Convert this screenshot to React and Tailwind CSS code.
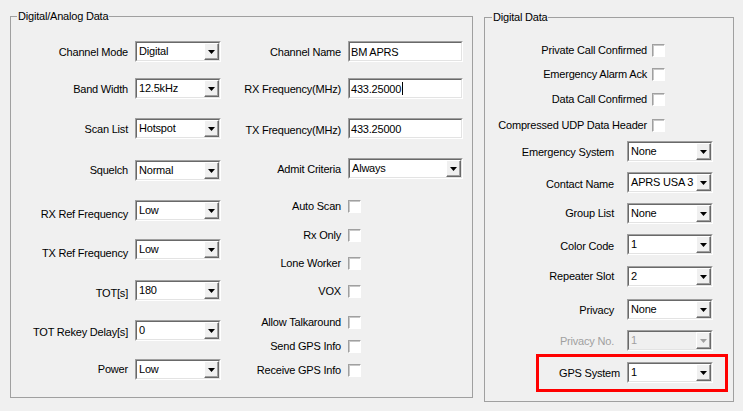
function Arrow({ disabled }) {
  return (
    <svg width="7" height="4" viewBox="0 0 7 4">
      <polygon points="0,0 7,0 3.5,4" fill={disabled ? "#a0a0a0" : "#000"} />
    </svg>
  );
}

function Combo({ value, w = "w-[86px]", disabled }) {
  return (
    <div
      className={`${w} h-[21px] shrink-0 border border-t-[#a0a0a0] border-l-[#a0a0a0] border-b-white border-r-white`}
    >
      <div
        className={`flex h-full border border-t-[#696969] border-l-[#696969] border-b-[#e3e3e3] border-r-[#e3e3e3] ${
          disabled ? "bg-[#f0f0f0] text-[#a0a0a0]" : "bg-white"
        }`}
      >
        <span className="flex-1 overflow-hidden whitespace-nowrap pl-[2px] leading-[16px]">
          {value}
        </span>
        <div className="flex w-[15px] items-center justify-center border border-t-white border-l-white border-b-[#696969] border-r-[#696969] bg-[#f0f0f0] shadow-[inset_-1px_-1px_0_#a0a0a0]">
          <Arrow disabled={disabled} />
        </div>
      </div>
    </div>
  );
}

function TextBox({ value, caret }) {
  return (
    <div className="w-[115px] h-[21px] border border-t-[#a0a0a0] border-l-[#a0a0a0] border-b-white border-r-white">
      <div className="flex h-full items-center border border-t-[#696969] border-l-[#696969] border-b-[#e3e3e3] border-r-[#e3e3e3] bg-white pl-[1px] leading-[16px]">
        <span>{value}</span>
        {caret && <span className="ml-[1px] h-[13px] w-px bg-black" />}
      </div>
    </div>
  );
}

function Check() {
  return (
    <div className="h-[13px] w-[13px] shrink-0 border border-t-[#a0a0a0] border-l-[#a0a0a0] border-b-white border-r-white bg-white shadow-[inset_1px_1px_0_#c8c8c8]" />
  );
}

export default function App() {
  return (
    <div className="flex h-[411px] w-[743px] items-start overflow-hidden bg-[#f0f0f0] font-['Liberation_Sans',Arial,sans-serif] text-[11px] leading-[13px] tracking-[-0.2px] text-black">
      {/* Digital/Analog Data */}
      <div className="relative ml-[10px] mt-[16px] flex h-[382px] w-[463px] border border-[#a0a0a0]">
        <span className="absolute left-[6px] -top-[7px] bg-[#f0f0f0] px-[1px]">
          Digital/Analog Data
        </span>

        <div className="flex w-[210px] flex-col">
          <div className="mt-[24px] flex h-[21px] items-center">
            <span className="w-[117px] translate-y-[1px] text-right">Channel Mode</span>
            <div className="ml-[7px]"><Combo value="Digital" /></div>
          </div>
          <div className="mt-[16px] flex h-[21px] items-center">
            <span className="w-[117px] translate-y-[1px] text-right">Band Width</span>
            <div className="ml-[7px]"><Combo value="12.5kHz" /></div>
          </div>
          <div className="mt-[19px] flex h-[21px] items-center">
            <span className="w-[117px] translate-y-[1px] text-right">Scan List</span>
            <div className="ml-[7px]"><Combo value="Hotspot" /></div>
          </div>
          <div className="mt-[21px] flex h-[21px] items-center">
            <span className="w-[117px] text-right">Squelch</span>
            <div className="ml-[7px]"><Combo value="Normal" /></div>
          </div>
          <div className="mt-[19px] flex h-[21px] items-center">
            <span className="w-[117px] translate-y-[4px] text-right">RX Ref Frequency</span>
            <div className="ml-[7px]"><Combo value="Low" /></div>
          </div>
          <div className="mt-[18px] flex h-[21px] items-center">
            <span className="w-[117px] translate-y-[4px] text-right">TX Ref Frequency</span>
            <div className="ml-[7px]"><Combo value="Low" /></div>
          </div>
          <div className="mt-[20px] flex h-[21px] items-center">
            <span className="w-[117px] translate-y-[3px] text-right">TOT[s]</span>
            <div className="ml-[7px]"><Combo value="180" /></div>
          </div>
          <div className="mt-[19px] flex h-[21px] items-center">
            <span className="w-[117px] translate-y-[2px] text-right">TOT Rekey Delay[s]</span>
            <div className="ml-[7px]"><Combo value="0" /></div>
          </div>
          <div className="mt-[18px] flex h-[21px] items-center">
            <span className="w-[117px] text-right">Power</span>
            <div className="ml-[7px]"><Combo value="Low" /></div>
          </div>
        </div>

        <div className="flex flex-col">
          <div className="mt-[24px] flex h-[21px] items-center">
            <span className="w-[120px] translate-y-[1px] text-right whitespace-nowrap">Channel Name</span>
            <div className="ml-[7px]"><TextBox value="BM APRS" /></div>
          </div>
          <div className="mt-[16px] flex h-[21px] items-center">
            <span className="w-[120px] translate-y-[1px] text-right whitespace-nowrap">RX Frequency(MHz)</span>
            <div className="ml-[7px]"><TextBox value="433.25000" caret /></div>
          </div>
          <div className="mt-[19px] flex h-[21px] items-center">
            <span className="w-[120px] translate-y-[2px] text-right whitespace-nowrap">TX Frequency(MHz)</span>
            <div className="ml-[7px]"><TextBox value="433.25000" /></div>
          </div>
          <div className="mt-[19px] flex h-[21px] items-center">
            <span className="w-[120px] translate-y-[1px] text-right whitespace-nowrap">Admit Criteria</span>
            <div className="ml-[7px]"><Combo value="Always" w="w-[115px]" /></div>
          </div>
          <div className="mt-[21px] flex h-[13px] items-center">
            <span className="w-[120px] text-right">Auto Scan</span>
            <div className="ml-[7px]"><Check /></div>
          </div>
          <div className="mt-[16px] flex h-[13px] items-center">
            <span className="w-[120px] text-right">Rx Only</span>
            <div className="ml-[7px]"><Check /></div>
          </div>
          <div className="mt-[15px] flex h-[13px] items-center">
            <span className="w-[120px] text-right">Lone Worker</span>
            <div className="ml-[7px]"><Check /></div>
          </div>
          <div className="mt-[15px] flex h-[13px] items-center">
            <span className="w-[120px] text-right">VOX</span>
            <div className="ml-[7px]"><Check /></div>
          </div>
          <div className="mt-[18px] flex h-[13px] items-center">
            <span className="w-[120px] text-right">Allow Talkaround</span>
            <div className="ml-[7px]"><Check /></div>
          </div>
          <div className="mt-[11px] flex h-[13px] items-center">
            <span className="w-[120px] text-right">Send GPS Info</span>
            <div className="ml-[7px]"><Check /></div>
          </div>
          <div className="mt-[11px] flex h-[13px] items-center">
            <span className="w-[120px] text-right">Receive GPS Info</span>
            <div className="ml-[7px]"><Check /></div>
          </div>
        </div>
      </div>

      {/* Digital Data */}
      <div className="relative ml-[11px] mt-[17px] flex h-[385px] w-[250px] flex-col border border-[#a0a0a0]">
        <span className="absolute left-[7px] -top-[7px] bg-[#f0f0f0] px-[1px]">
          Digital Data
        </span>

        <div className="mt-[26px] flex h-[13px] items-center">
          <span className="w-[162px] text-right whitespace-nowrap">Private Call Confirmed</span>
          <div className="ml-[5px]"><Check /></div>
        </div>
        <div className="mt-[11px] flex h-[13px] items-center">
          <span className="w-[162px] text-right whitespace-nowrap">Emergency Alarm Ack</span>
          <div className="ml-[5px]"><Check /></div>
        </div>
        <div className="mt-[12px] flex h-[13px] items-center">
          <span className="w-[162px] text-right whitespace-nowrap">Data Call Confirmed</span>
          <div className="ml-[5px]"><Check /></div>
        </div>
        <div className="mt-[13px] flex h-[13px] items-center">
          <span className="w-[162px] text-right whitespace-nowrap">Compressed UDP Data Header</span>
          <div className="ml-[5px]"><Check /></div>
        </div>

        <div className="mt-[9px] flex h-[21px] items-center">
          <span className="w-[129px] translate-y-[1px] text-right">Emergency System</span>
          <div className="ml-[13px]"><Combo value="None" /></div>
        </div>
        <div className="mt-[10px] flex h-[21px] items-center">
          <span className="w-[129px] translate-y-[2px] text-right">Contact Name</span>
          <div className="ml-[13px]"><Combo value="APRS USA 3" /></div>
        </div>
        <div className="mt-[10px] flex h-[21px] items-center">
          <span className="w-[129px] text-right">Group List</span>
          <div className="ml-[13px]"><Combo value="None" /></div>
        </div>
        <div className="mt-[10px] flex h-[21px] items-center">
          <span className="w-[129px] translate-y-[2px] text-right">Color Code</span>
          <div className="ml-[13px]"><Combo value="1" /></div>
        </div>
        <div className="mt-[11px] flex h-[21px] items-center">
          <span className="w-[129px] text-right">Repeater Slot</span>
          <div className="ml-[13px]"><Combo value="2" /></div>
        </div>
        <div className="mt-[12px] flex h-[21px] items-center">
          <span className="w-[129px] translate-y-[1px] text-right">Privacy</span>
          <div className="ml-[13px]"><Combo value="None" /></div>
        </div>
        <div className="mt-[10px] flex h-[21px] items-center">
          <span className="w-[129px] translate-y-[1px] text-right text-[#a0a0a0]">Privacy No.</span>
          <div className="ml-[13px]"><Combo value="1" disabled /></div>
        </div>

        <div className="ml-[51px] mt-[3px] h-[38px] w-[192px] border-[3px] border-[#ff0000]">
          <div className="mt-[5px] flex h-[21px] items-center">
            <span className="w-[81px] translate-y-[1px] text-right">GPS System</span>
            <div className="ml-[7px]"><Combo value="1" /></div>
          </div>
        </div>
      </div>
    </div>
  );
}
